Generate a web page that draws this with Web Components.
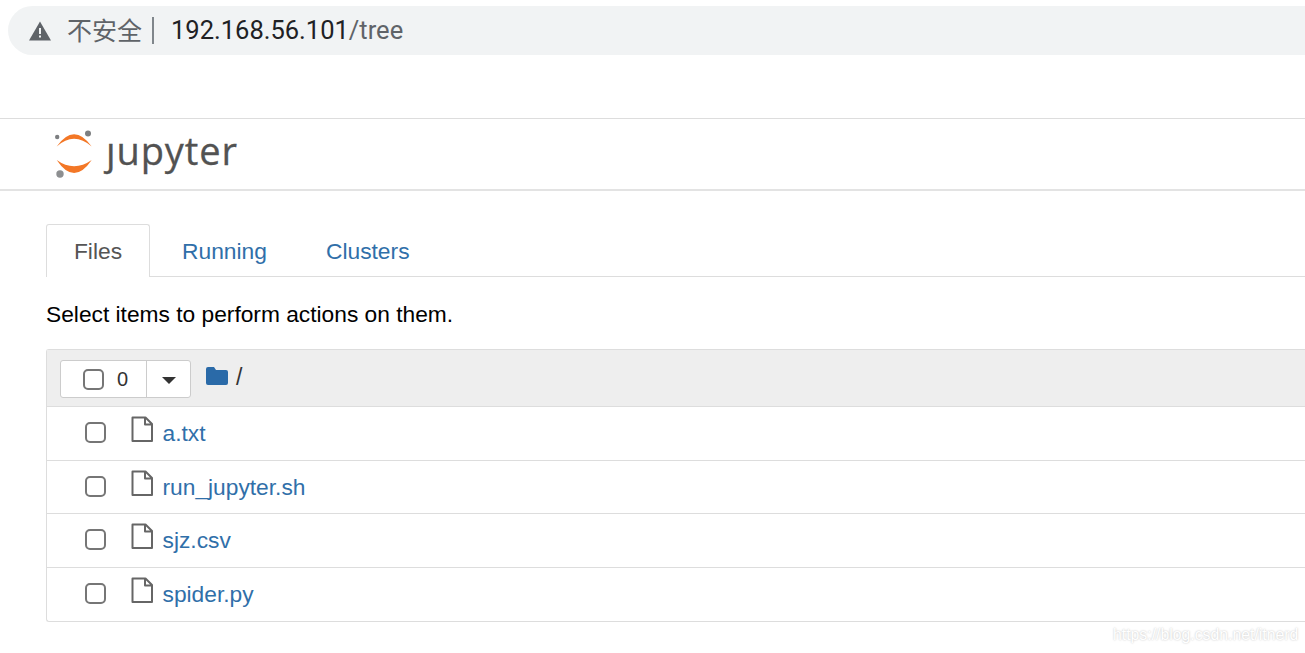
<!DOCTYPE html>
<html lang="zh"><head><meta charset="utf-8"><title>Jupyter tree</title>
<style>
html,body{margin:0;padding:0;background:#fff;overflow:hidden}
body{width:1305px;height:653px;font-family:"Liberation Sans",Arial,sans-serif;position:relative}
</style></head><body>
<address-bar></address-bar>
<jupyter-header></jupyter-header>
<main-area>
  <tab-bar></tab-bar>
  <p-hint>Select items to perform actions on them.</p-hint>
  <file-list>
    <file-row>a.txt</file-row>
    <file-row>run_jupyter.sh</file-row>
    <file-row>sjz.csv</file-row>
    <file-row>spider.py</file-row>
  </file-list>
</main-area>
<water-mark>https://blog.csdn.net/itnerd</water-mark>
<script>
function def(name, html){
  customElements.define(name, class extends HTMLElement{
    constructor(){super();this.attachShadow({mode:'open'}).innerHTML=html;}
  });
}
const CHECK=`<span class="cb"></span>`;
const CBSTYLE=`.cb{display:block;box-sizing:border-box;width:21px;height:21px;border:2px solid #767676;border-radius:5px;background:#fff}`;
def('address-bar',`<style>
:host{display:block;padding-top:6px;height:55px;box-sizing:border-box}
.bar{height:49px;margin-left:8px;background:#f1f3f4;border-radius:24.5px 0 0 24.5px;display:flex;align-items:center;padding-left:21px;font-family:Roboto,"Noto Sans CJK SC",sans-serif;font-size:25.5px;white-space:nowrap}
svg{width:22px;height:20px;flex:none;margin-top:1px}
.ns{font-family:"Noto Sans CJK SC",sans-serif;font-size:25px;line-height:30px;color:#5f6368;margin:-3px 0 0 16px}
.sep{width:2px;height:27px;background:#80868b;margin:0 17px 0 10px;flex:none}
.url{margin-top:-2px}
.host{color:#202124}.path{color:#5f6368}
</style><div class="bar"><svg viewBox="0 0 22 20"><path fill="#5f6368" d="M11 .5 22 19.5H0Z"/><rect x="10" y="7" width="2" height="6" fill="#f1f3f4"/><rect x="10" y="14.5" width="2" height="2" fill="#f1f3f4"/></svg><span class="ns">不安全</span><span class="sep"></span><span class="url"><span class="host">192.168.56.101</span><span class="path">/tree</span></span></div>`);
def('jupyter-header',`<style>
:host{display:block;margin-top:63px;border-top:1px solid #ddd;border-bottom:2px solid #e3e3e3;height:70px}
.in{display:flex;align-items:flex-start;padding-left:53px;height:100%}
svg{width:42px;height:50px;flex:none;margin-top:10px}
.t{font-family:"Open Sans",sans-serif;font-size:38px;line-height:50px;color:#525252;margin-left:11px;margin-top:6px;letter-spacing:.9px;-webkit-text-stroke:.3px #525252}
.j{display:inline-block;clip-path:inset(18px -2px -4px -14px)}
</style><div class="in"><svg viewBox="0 0 42 50">
<circle cx="4.200" cy="8" r="2.200" fill="#7d7f81"/><circle cx="35" cy="4.500" r="3" fill="#7d7f81"/><circle cx="7" cy="45" r="3.700" fill="#8d8f91"/>
<path fill="#f37726" d="M3.700 17.500Q21-7 38.700 17.500Q21 2 3.700 17.500Z"/>
<path fill="#f37726" d="M3.700 31Q21 43.500 38.700 31Q21 57 3.700 31Z"/>
</svg><span class="t"><span class="j">j</span>upyter</span></div>`);
def('main-area',`<style>:host{display:block;padding:33px 0 0 46px}</style><slot></slot>`);
def('tab-bar',`<style>
:host{display:flex;height:53px;box-sizing:border-box;border-bottom:1px solid #ddd;font-size:22.800px}
a{display:flex;align-items:center;text-decoration:none;color:#306fa9;height:53px;box-sizing:border-box;padding-top:1px}
.on{width:104px;justify-content:center;color:#555;border:1px solid #ddd;border-bottom:0;border-radius:3px 3px 0 0;background:#fff}
.r{margin-left:32px}.c{margin-left:59px}
</style><a class="on">Files</a><a class="r">Running</a><a class="c">Clusters</a>`);
def('p-hint',`<style>:host{display:block;font-size:22.750px;line-height:26px;color:#000;margin:24px 0 22px}</style><slot></slot>`);
def('file-list',`<style>
${CBSTYLE}
:host{display:block;border:1px solid #ddd;border-right:0;border-radius:3px 0 0 3px;width:1259px;box-sizing:border-box;font-size:22.750px}
.tb{height:57px;box-sizing:border-box;background:#eee;border-bottom:1px solid #ddd;display:flex;align-items:flex-start;padding:10px 0 0 13px}
.grp{display:flex;height:38px;box-sizing:border-box;border:1px solid #ccc;border-radius:3px;background:#fff}
.l{width:86px;display:flex;align-items:center;padding-left:21.500px;box-sizing:border-box;border-right:1px solid #ccc;font-size:20px;color:#333}
.l span+span{margin-left:13.500px}
.d{width:43px;display:flex;align-items:center;justify-content:center}
.car{width:0;height:0;border:7px solid transparent;border-top:7px solid #333;border-bottom:0;margin-top:3px;margin-right:-1px}
svg{width:22px;height:18px;margin:7px 0 0 15px;flex:none}
.sl{margin-left:8px;margin-top:3px;color:#333;font-size:23px;line-height:28px}
</style><div class="tb"><div class="grp"><div class="l"><span class="cb"></span><span>0</span></div><div class="d"><span class="car"></span></div></div>
<svg viewBox="0 0 22 18"><path fill="#2a6aa8" d="M2 0h6l2 3h10a2 2 0 0 1 2 2v11a2 2 0 0 1-2 2H2a2 2 0 0 1-2-2V2a2 2 0 0 1 2-2Z"/></svg><span class="sl">/</span></div><slot></slot>`);
def('file-row',`<style>
${CBSTYLE}
:host{display:flex;height:53.600px;box-sizing:border-box;border-bottom:1px solid #ddd;align-items:flex-start;color:#306fa9}
:host(:last-child){border-bottom:0}
.cb{margin:15px 0 0 38px;flex:none}
svg{width:22px;height:26px;margin:9px 0 0 25px;flex:none}
.n{margin:11px 0 0 9.500px;line-height:30px}
</style>${CHECK}<svg viewBox="0 0 22 26"><path fill="none" stroke="#666" stroke-width="2" stroke-linejoin="round" d="M1.500 1.500H14.500L21 8V25H1.500ZM14 1.500V8.500H21"/></svg><span class="n"><slot></slot></span>`);
def('water-mark',`<style>:host{position:absolute;left:1113px;top:625px;font-size:15.800px;line-height:20px;color:#fff;text-shadow:0 0 2px #bbb;white-space:nowrap}</style><slot></slot>`);
</script>
</body></html>
